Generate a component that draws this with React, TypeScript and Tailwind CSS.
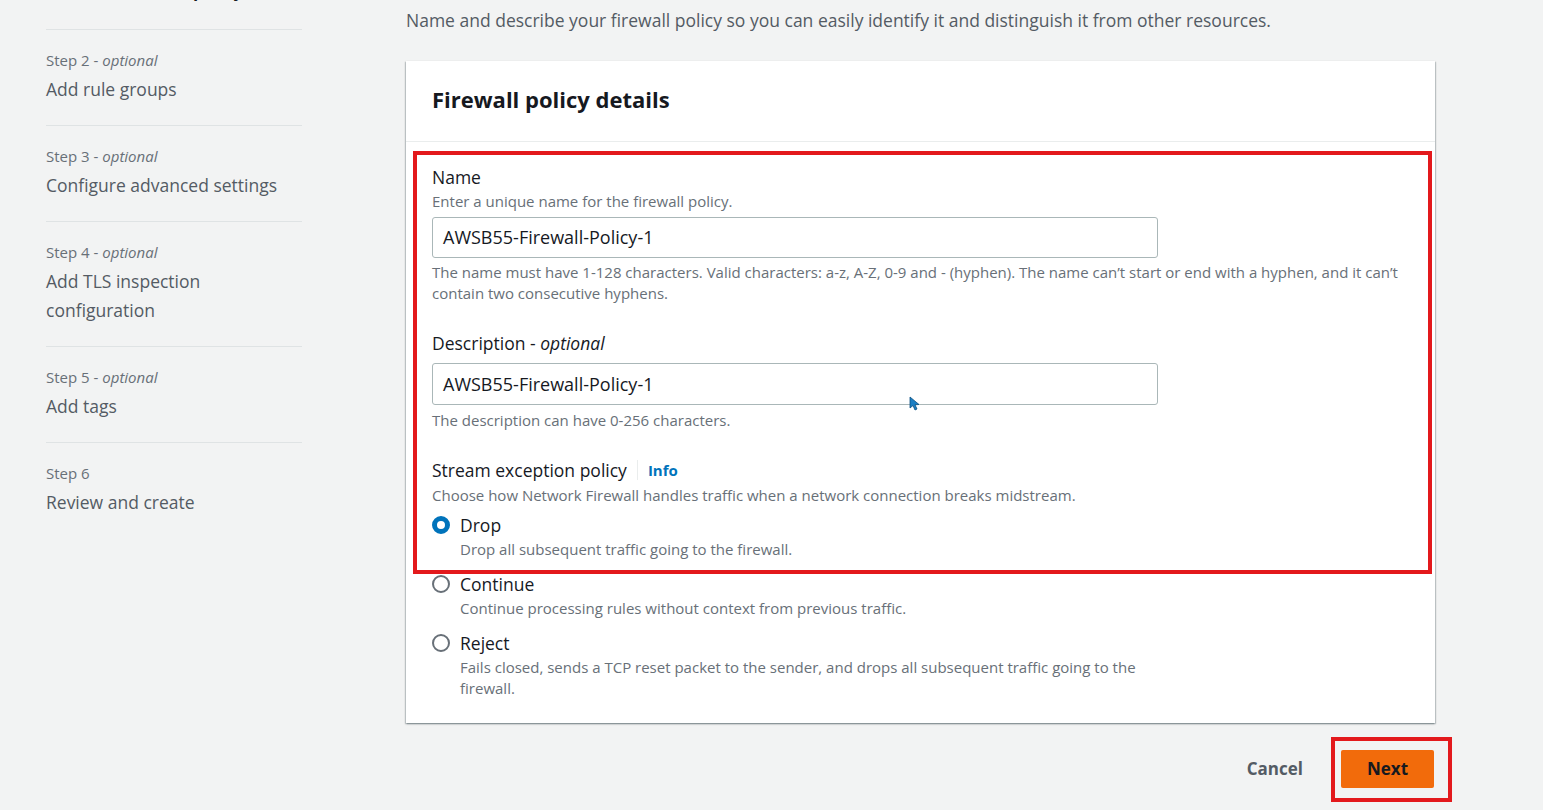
// passos do assistente (lado esquerdo)
const passos = [
  { passo: 'Step 2', opcional: true, titulo: 'Add rule groups' },
  { passo: 'Step 3', opcional: true, titulo: 'Configure advanced settings' },
  { passo: 'Step 4', opcional: true, titulo: 'Add TLS inspection configuration' },
  { passo: 'Step 5', opcional: true, titulo: 'Add tags' },
  { passo: 'Step 6', opcional: false, titulo: 'Review and create' },
]

const opcoes = [
  { valor: 'drop', titulo: 'Drop', texto: 'Drop all subsequent traffic going to the firewall.' },
  { valor: 'continue', titulo: 'Continue', texto: 'Continue processing rules without context from previous traffic.' },
  { valor: 'reject', titulo: 'Reject', texto: 'Fails closed, sends a TCP reset packet to the sender, and drops all subsequent traffic going to the firewall.' },
]

function Radio({ marcado }: { marcado: boolean }) {
  if (marcado) {
    return <span className="mt-[2px] w-[18px] h-[18px] rounded-full border-[5px] border-[#0073bb] bg-white shrink-0" />
  }
  return <span className="mt-[2px] w-[18px] h-[18px] rounded-full border-2 border-[#687078] bg-white shrink-0" />
}

function App() {
  const selecionado = 'drop'

  return (
    <div className="w-[1543px] h-[810px] overflow-hidden bg-[#f2f3f3] flex text-[#16191f]" style={{ fontFamily: '"Open Sans", "Noto Sans", sans-serif' }}>
      {/* Navegação lateral */}
      <nav className="w-[302px] pl-[46px] shrink-0 -mt-[20px]">
        <div className="h-[22px] text-[17px] font-bold text-[#16191f] leading-[22px]">Describe firewall policy</div>
        <div className="mt-[27px]">
          {passos.map((p) => (
            <div key={p.passo} className="border-t border-[#dfe3e4] pt-[19px] pb-[21px]">
              <div className="text-[15px] leading-[22px] text-[#687078]">
                {p.passo}
                {p.opcional && <span> - <i>optional</i></span>}
              </div>
              <div className="mt-[4px] text-[17.5px] leading-[29px] text-[#545b64] w-[245px]">{p.titulo}</div>
            </div>
          ))}
        </div>
      </nav>

      {/* Conteúdo principal */}
      <main className="ml-[104px] w-[1029px] shrink-0">
        <p className="mt-[8px] text-[17.5px] leading-[24px] text-[#545b64]">
          Name and describe your firewall policy so you can easily identify it and distinguish it from other resources.
        </p>

        <div className="relative mt-[29px] bg-white shadow-[0_1px_2px_rgba(0,28,36,0.3),1px_1px_1px_rgba(0,28,36,0.15),-1px_1px_1px_rgba(0,28,36,0.15)]">
          <div className="h-[81px] border-b border-[#eaeded] px-[26px] flex items-center">
            <h2 className="text-[22px] font-bold leading-[28px] -mt-[4px]">Firewall policy details</h2>
          </div>

          <div className="px-[26px] pt-[24px] pb-[24px]">
            {/* Nome */}
            <div className="text-[17.5px] leading-[22px]">Name</div>
            <div className="text-[15px] leading-[20px] text-[#687078] mt-[3px]">Enter a unique name for the firewall policy.</div>
            <div className="mt-[6px] w-[726px] h-[41px] border border-[#aab7b8] rounded-[3px] px-[10px] flex items-center text-[18px]">
              AWSB55-Firewall-Policy-1
            </div>
            <div className="mt-[4px] text-[15px] leading-[21px] text-[#687078] pr-[6px]">
              The name must have 1-128 characters. Valid characters: a-z, A-Z, 0-9 and - (hyphen). The name can’t start or end with a hyphen, and it can’t contain two consecutive hyphens.
            </div>

            {/* Descrição */}
            <div className="mt-[28px] text-[17.5px] leading-[22px]">
              Description - <i>optional</i>
            </div>
            <div className="relative mt-[9px] w-[726px] h-[42px] border border-[#aab7b8] rounded-[3px] px-[10px] flex items-center text-[18px]">
              AWSB55-Firewall-Policy-1
              {/* cursor do mouse */}
              <svg className="absolute left-[476px] top-[32px]" width="11" height="15" viewBox="0 0 11 15">
                <path d="M1 1 L1 12 L4 9.5 L6 14 L8 13 L6 8.8 L10 8.5 Z" fill="#1b7fc4" stroke="#0b4f80" strokeWidth="0.8" />
              </svg>
            </div>
            <div className="mt-[5px] text-[15px] leading-[20px] text-[#687078]">The description can have 0-256 characters.</div>

            {/* Política de exceção */}
            <div className="mt-[29px] flex items-center text-[17.5px] leading-[22px]">
              <span>Stream exception policy</span>
              <span className="mx-[10px] h-[20px] border-l border-[#eaeded]" />
              <span className="text-[#0073bb] font-bold text-[15px]">Info</span>
            </div>
            <div className="mt-[4px] text-[15px] leading-[20px] text-[#687078]">
              Choose how Network Firewall handles traffic when a network connection breaks midstream.
            </div>

            <div className="mt-[9px] w-[726px] flex flex-col gap-[13px]">
              {opcoes.map((o) => (
                <div key={o.valor} className="flex gap-[10px]">
                  <Radio marcado={o.valor === selecionado} />
                  <div className="flex flex-col">
                    <span className="text-[17.5px] leading-[22px]">{o.titulo}</span>
                    <span className="mt-[3px] text-[15px] leading-[21px] text-[#687078]">{o.texto}</span>
                  </div>
                </div>
              ))}
            </div>
          </div>

          {/* Destaque vermelho (anotação) */}
          <div className="absolute left-[7px] top-[90px] w-[1019px] h-[423px] border-[4px] border-[#e3191c] pointer-events-none" />
        </div>

        {/* Botões */}
        <div className="mt-[27px] flex justify-end items-center gap-[38px] pr-[1px]">
          <span className="text-[17px] font-bold text-[#545b64]">Cancel</span>
          <div className="relative">
            <button className="w-[93px] h-[38px] rounded-[2px] bg-[#f26b0b] text-[17px] font-bold text-[#16191f]">Next</button>
            <div className="absolute -left-[10px] -top-[13px] w-[121px] h-[65px] border-[4px] border-[#e3191c] pointer-events-none" />
          </div>
        </div>
      </main>
    </div>
  )
}

export default App
